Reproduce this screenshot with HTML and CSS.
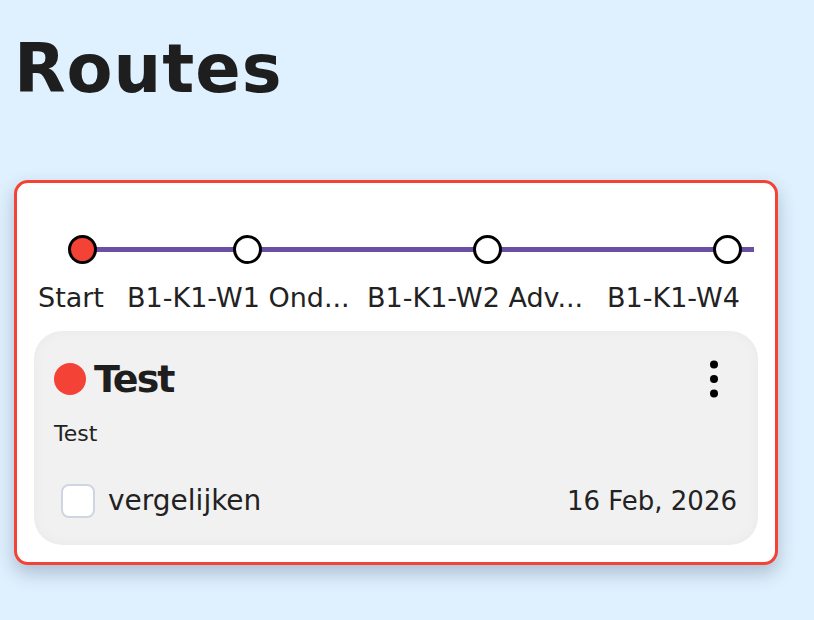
FILE: index.html
```html
<!DOCTYPE html>
<html lang="nl">
<head>
<meta charset="utf-8">
<title>Routes</title>
<link rel="stylesheet" href="styles.css">
</head>
<body>
<main class="page">
  <h1 class="page-title">Routes</h1>
  <section class="route-card">
    <div class="timeline">
      <div class="step step-first">
        <div class="step-track"><span class="node node-active"></span></div>
        <div class="step-label">Start</div>
      </div>
      <div class="step">
        <div class="step-track"><span class="node"></span></div>
        <div class="step-label">B1-K1-W1 Ond...</div>
      </div>
      <div class="step">
        <div class="step-track"><span class="node"></span></div>
        <div class="step-label">B1-K1-W2 Adv...</div>
      </div>
      <div class="step">
        <div class="step-track"><span class="node"></span></div>
        <div class="step-label">B1-K1-W4</div>
      </div>
    </div>
    <div class="route-item">
      <div class="item-head">
        <span class="status-dot"></span>
        <h2 class="item-title">Test</h2>
        <button class="kebab" type="button" aria-label="Meer opties">
          <svg width="40" height="40" viewBox="0 0 40 40"><circle cx="20" cy="5.5" r="4"/><circle cx="20" cy="20" r="4"/><circle cx="20" cy="34.5" r="4"/></svg>
        </button>
      </div>
      <p class="item-desc">Test</p>
      <div class="item-foot">
        <label class="compare">
          <span class="checkbox"></span>
          <span class="compare-text">vergelijken</span>
        </label>
        <span class="item-date">16 Feb, 2026</span>
      </div>
    </div>
  </section>
</main>
</body>
</html>
```

FILE: styles.css
```css
* { box-sizing: border-box; }

html {
  background: #dff0fe;
}

body {
  margin: 0;
  min-height: 100vh;
  font-family: "DejaVu Sans", "Liberation Sans", sans-serif;
  color: #1f1f1f;
}

.page {
  padding: 0 14px 40px;
}

.page-title {
  margin: 36px 0 0;
  font-size: 67px;
  line-height: 67px;
  font-weight: 700;
  letter-spacing: 1px;
  color: #1e1e1e;
}

.route-card {
  margin-top: 77px;
  width: 764px;
  background: #fff;
  border: 3px solid #f44336;
  border-radius: 14px;
  padding: 17px;
  box-shadow: 0 8px 18px rgba(40, 60, 90, 0.28);
}

.timeline {
  display: flex;
  margin: 0 4px;
  padding-top: 35px;
  overflow: hidden;
}

.step {
  flex: 0 0 240px;
  width: 240px;
}

.step-first {
  flex-basis: 89px;
  width: 89px;
}

.step-track {
  position: relative;
  height: 29px;
  display: flex;
  justify-content: center;
}

.step-track::before {
  content: "";
  position: absolute;
  left: 0;
  right: 0;
  top: 12px;
  height: 5px;
  background: #6b4fa3;
}

.step-first .step-track::before {
  left: 50%;
}

.node {
  position: relative;
  z-index: 1;
  width: 29px;
  height: 29px;
  border-radius: 50%;
  border: 3.5px solid #000;
  background: #fff;
}

.node-active {
  background: #f44336;
}

.step-label {
  margin-top: 18px;
  font-size: 27px;
  line-height: 32px;
  white-space: nowrap;
  color: #222;
}

.route-item {
  margin-top: 17px;
  background: #f1f1f1;
  border-radius: 28px;
  padding: 20px 21px 27px 20px;
  box-shadow: inset 0 0 14px rgba(0, 0, 0, 0.035);
}

.item-head {
  display: flex;
  align-items: center;
  height: 56px;
}

.status-dot {
  flex: 0 0 32px;
  width: 32px;
  height: 32px;
  border-radius: 50%;
  background: #f44336;
  margin-right: 8px;
}

.item-title {
  flex: 1;
  margin: 0;
  font-size: 38px;
  line-height: 56px;
  font-weight: 700;
  letter-spacing: -2px;
  color: #1e1e1e;
}

.kebab {
  width: 40px;
  height: 40px;
  margin-right: 3px;
  padding: 0;
  border: 0;
  background: transparent;
  display: flex;
}

.kebab svg { fill: #000; }

.item-desc {
  margin: 13px 0 0;
  font-size: 22px;
  line-height: 28px;
  color: #222;
}

.item-foot {
  margin-top: 36px;
  height: 34px;
  display: flex;
  align-items: center;
  justify-content: space-between;
}

.compare {
  display: flex;
  align-items: center;
  margin-left: 7px;
}

.checkbox {
  width: 34px;
  height: 34px;
  border: 2px solid #cfd6e1;
  border-radius: 8px;
  background: #fff;
  margin-right: 13px;
}

.compare-text {
  font-size: 28px;
  line-height: 34px;
  color: #222;
}

.item-date {
  font-size: 26px;
  line-height: 34px;
  color: #222;
}
```
